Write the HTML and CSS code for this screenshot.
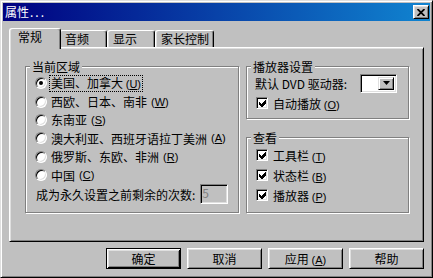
FILE: index.html
```html
<!DOCTYPE html>
<html lang="zh">
<head>
    <title>属性</title>
    <meta charset="utf-8">
    <link rel="stylesheet" href="styles.css">
</head>
<body>
<div class="window">
    <div class="titlebar">
        <span class="title">属性<span class="dots">...</span></span>
        <span class="close">
            <svg width="8" height="7" viewBox="0 0 8 7"><path d="M0.5 0 L7.5 7 M7.5 0 L0.5 7" stroke="#000" stroke-width="1.8"/></svg>
        </span>
    </div>
    <div class="content">
        <div class="tabs">
            <div class="tab active">常规</div>
            <div class="tab">音频</div>
            <div class="tab">显示</div>
            <div class="tab">家长控制</div>
        </div>
        <div class="panel">
            <div class="group region">
                <div class="group-title">当前区域</div>
                <div class="radios">
                    <div class="radio-row"><span class="radio checked"></span><span class="focus">美国、加拿大 <span class="key">(<u>U</u>)</span></span></div>
                    <div class="radio-row"><span class="radio"></span>西欧、日本、南非 <span class="key">(<u>W</u>)</span></div>
                    <div class="radio-row"><span class="radio"></span>东南亚 <span class="key">(<u>S</u>)</span></div>
                    <div class="radio-row"><span class="radio"></span>澳大利亚、西班牙语拉丁美洲 <span class="key">(<u>A</u>)</span></div>
                    <div class="radio-row"><span class="radio"></span>俄罗斯、东欧、非洲 <span class="key">(<u>R</u>)</span></div>
                    <div class="radio-row"><span class="radio"></span>中国 <span class="key">(<u>C</u>)</span></div>
                </div>
                <div class="count-row">
                    <span>成为永久设置之前剩余的次数:</span>
                    <span class="count-box">5</span>
                </div>
            </div>
            <div class="side">
                <div class="group player">
                    <div class="group-title">播放器设置</div>
                    <div class="dvd-row">
                        <span>默认 DVD 驱动器:</span>
                        <span class="combo">
                            <span class="combo-field"></span>
                            <span class="combo-btn">
                                <svg width="7" height="4" viewBox="0 0 7 4"><polygon points="0,0 7,0 3.5,4" fill="#000"/></svg>
                            </span>
                        </span>
                    </div>
                    <div class="check-row">
                        <span class="check"><svg width="7" height="7" viewBox="0 0 7 7"><path d="M0 2 L2 4 L6 0 L7 0 L7 3 L3 7 L2 7 L0 5 Z" fill="#000"/></svg></span>
                        <span>自动播放 <span class="key">(<u>O</u>)</span></span>
                    </div>
                </div>
                <div class="group view">
                    <div class="group-title">查看</div>
                    <div class="check-row">
                        <span class="check"><svg width="7" height="7" viewBox="0 0 7 7"><path d="M0 2 L2 4 L6 0 L7 0 L7 3 L3 7 L2 7 L0 5 Z" fill="#000"/></svg></span>
                        <span>工具栏 <span class="key">(<u>T</u>)</span></span>
                    </div>
                    <div class="check-row">
                        <span class="check"><svg width="7" height="7" viewBox="0 0 7 7"><path d="M0 2 L2 4 L6 0 L7 0 L7 3 L3 7 L2 7 L0 5 Z" fill="#000"/></svg></span>
                        <span>状态栏 <span class="key">(<u>B</u>)</span></span>
                    </div>
                    <div class="check-row">
                        <span class="check"><svg width="7" height="7" viewBox="0 0 7 7"><path d="M0 2 L2 4 L6 0 L7 0 L7 3 L3 7 L2 7 L0 5 Z" fill="#000"/></svg></span>
                        <span>播放器 <span class="key">(<u>P</u>)</span></span>
                    </div>
                </div>
            </div>
        </div>
        <div class="buttons">
            <button class="btn default" type="button">确定</button>
            <button class="btn" type="button">取消</button>
            <button class="btn" type="button">应用 <span class="key">(<u>A</u>)</span></button>
            <button class="btn" type="button">帮助</button>
        </div>
    </div>
</div>
</body>
</html>
```

FILE: styles.css
```css
* {
    box-sizing: border-box;
}

body {
    margin: 0;
    background: #c0c0c0;
    font-family: "Noto Sans CJK SC", sans-serif;
    font-size: 12px;
    color: #000;
}

.key {
    font-family: "Liberation Sans", "Noto Sans CJK SC", sans-serif;
    font-size: 11px;
}

u {
    text-underline-offset: 1px;
}

.window {
    width: 433px;
    height: 278px;
    padding: 2px;
    background: #c0c0c0;
    border: 1px solid;
    border-color: #dfdfdf #000 #000 #dfdfdf;
    box-shadow: inset 1px 1px #fff, inset -1px -1px #808080;
}

.titlebar {
    height: 18px;
    display: flex;
    align-items: center;
    justify-content: space-between;
    padding: 0 1px 0 2px;
    background: linear-gradient(to right, #000080, #1084d0);
    color: #fff;
}

.title {
    line-height: 18px;
}

.dots {
    letter-spacing: 2px;
    margin-left: 1px;
}

.close {
    width: 16px;
    height: 14px;
    display: flex;
    align-items: center;
    justify-content: center;
    background: #c0c0c0;
    border: 1px solid;
    border-color: #fff #000 #000 #fff;
    box-shadow: inset 1px 1px #dfdfdf, inset -1px -1px #808080;
}

.content {
    padding: 0 6px;
}

/* tabs */
.tabs {
    display: flex;
    align-items: flex-end;
    height: 19px;
    margin-top: 7px;
    padding-left: 2px;
}

.tab {
    min-width: 48px;
    height: 17px;
    padding: 0 4px 0 5px;
    line-height: 16px;
    border: 1px solid;
    border-bottom: none;
    border-color: #fff #000 #000 #fff;
    border-radius: 3px 3px 0 0;
    box-shadow: inset 1px 0 #dfdfdf, inset -1px 0 #808080;
}

.tab.active {
    position: relative;
    z-index: 1;
    min-width: 52px;
    height: 21px;
    margin: 0 -2px -2px;
    padding: 0 4px 3px 8px;
    background: #c0c0c0;
}

.panel {
    height: 195px;
    display: flex;
    gap: 7px;
    padding: 18px 14px 0 15px;
    border: 1px solid;
    border-color: #fff #000 #000 #fff;
    box-shadow: inset 1px 1px #dfdfdf, inset -1px -1px #808080;
}

/* group boxes */
.group {
    display: flex;
    flex-direction: column;
    border: 1px solid #808080;
    box-shadow: inset 1px 1px #fff, 1px 1px #fff;
}

.group-title {
    align-self: flex-start;
    height: 14px;
    line-height: 14px;
    margin: -7px 0 0 4px;
    padding: 0 2px;
    background: #c0c0c0;
}

.region {
    width: 214px;
    height: 147px;
}

.radios {
    display: grid;
    grid-auto-rows: 18.4px;
    padding-left: 9px;
}

.radio-row {
    display: flex;
    align-items: center;
    gap: 4px;
}

.radio {
    width: 12px;
    height: 12px;
    display: flex;
    align-items: center;
    justify-content: center;
    border-radius: 50%;
    background: #fff;
    border: 1px solid;
    border-color: #808080 #fff #fff #808080;
    box-shadow: inset 1px 1px #000, inset -1px -1px #dfdfdf;
}

.radio.checked::after {
    content: "";
    width: 4px;
    height: 4px;
    border-radius: 50%;
    background: #000;
}

.focus {
    outline: 1px dotted #000;
    padding: 0 1px;
    margin-left: -1px;
    line-height: 14px;
}

.count-row {
    display: flex;
    align-items: center;
    height: 20px;
    padding-left: 10px;
}

.count-box {
    width: 28px;
    height: 20px;
    margin-left: 5px;
    padding-left: 1px;
    line-height: 16px;
    color: #808080;
    border: 1px solid;
    border-color: #808080 #fff #fff #808080;
    box-shadow: inset 1px 1px #000, inset -1px -1px #dfdfdf;
}

.side {
    flex: 1;
    display: flex;
    flex-direction: column;
}

.player {
    height: 53px;
}

.view {
    height: 76px;
    margin-top: 18px;
}

.dvd-row {
    display: flex;
    align-items: center;
    height: 20px;
    margin-top: -1px;
    padding: 0 11px 0 8px;
}

.combo {
    display: flex;
    width: 37px;
    height: 19px;
    margin-left: auto;
    padding: 2px;
    background: #fff;
    border: 1px solid;
    border-color: #808080 #fff #fff #808080;
    box-shadow: inset 1px 1px #000, inset -1px -1px #dfdfdf;
}

.combo-field {
    flex: 1;
}

.combo-btn {
    width: 16px;
    display: flex;
    align-items: center;
    justify-content: center;
    background: #c0c0c0;
    border: 1px solid;
    border-color: #dfdfdf #000 #000 #dfdfdf;
    box-shadow: inset 1px 1px #fff, inset -1px -1px #808080;
}

.check-row {
    display: flex;
    align-items: center;
    gap: 5px;
    height: 20px;
    padding-left: 9px;
}

.check {
    width: 12px;
    height: 12px;
    display: flex;
    align-items: center;
    justify-content: center;
    background: #fff;
    border: 1px solid;
    border-color: #808080 #fff #fff #808080;
    box-shadow: inset 1px 1px #000, inset -1px -1px #dfdfdf;
}

.check svg {
    shape-rendering: crispEdges;
}

/* bottom buttons */
.buttons {
    display: flex;
    justify-content: flex-end;
    gap: 6px;
    margin-top: 6px;
}

.btn {
    width: 75px;
    height: 21px;
    padding: 0;
    font: inherit;
    color: #000;
    background: #c0c0c0;
    border: 1px solid;
    border-color: #fff #000 #000 #fff;
    box-shadow: inset 1px 1px #dfdfdf, inset -1px -1px #808080;
}

.btn.default {
    border-color: #000;
    box-shadow: inset 1px 1px #fff, inset -1px -1px #000, inset 2px 2px #dfdfdf, inset -2px -2px #808080;
}
```
